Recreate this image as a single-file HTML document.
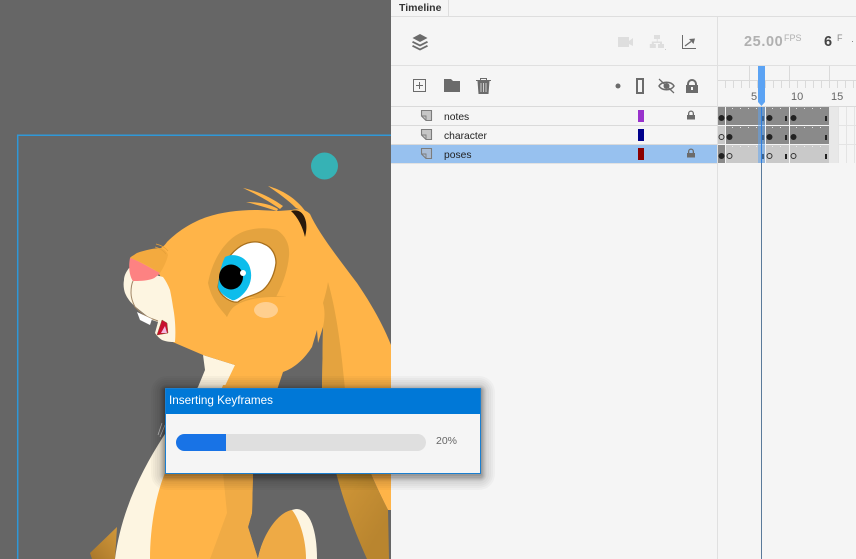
<!DOCTYPE html>
<html><head><meta charset="utf-8"><style>
html,body{margin:0;padding:0;background:#f5f5f5}
#r{position:relative;width:856px;height:559px;overflow:hidden;background:#f5f5f5;font-family:"Liberation Sans",sans-serif}
#r>*{position:absolute}
.t{font-size:10.3px;color:#222;line-height:12px;white-space:nowrap}
.s{background:rgba(0,0,0,.028);border-radius:8px}
</style></head><body><div id="r">
<svg style="left:0;top:0" width="391" height="559" viewBox="0 0 391 559">
<defs>
<linearGradient id="ls" x1="0" y1="1" x2="1" y2="0"><stop offset="0" stop-color="#a9772a"/><stop offset="1" stop-color="#d2983a"/></linearGradient>
<linearGradient id="ear2" x1="0" y1="0" x2="0.6" y2="1"><stop offset="0" stop-color="#e8a840"/><stop offset="1" stop-color="#b9852f"/></linearGradient>
</defs>
<rect width="391" height="559" fill="#666"/>
<path d="M17.700 559V135.300H391" fill="none" stroke="#2f98d8" stroke-width="1.500"/>
<circle cx="324.500" cy="166" r="13.500" fill="#36b2b5"/>
<!-- foot -->
<path d="M90 553L117 527L115 559H92Z" fill="url(#ls)"/>
<!-- cream body -->
<path d="M203 355L205 370L198 387C175 420 125 480 115 559H150L240 378L235 365Z" fill="#fdf5e1"/>
<path d="M162 423L158 435M165 425L160 437" stroke="#ccc" stroke-width=".7"/>
<!-- orange body -->
<path d="M223 385C215 410 180 440 165 473C155 497 150 530 150 559H258L248 527L252 513L253 473L277 385Z" fill="#ffb448"/>
<path d="M223 473L227 513L210 559H258L248 527L252 513L253 473Z" fill="#f0ab45"/>
<!-- knee -->
<path d="M258 559C262 535 280 510 297 509C310 510 317 530 317 559Z" fill="#fdf5e1"/>
<path d="M258 559C262 535 278 512 292 510C300 520 306 540 306 559Z" fill="#eeaa45"/>
<!-- lower ear -->
<path d="M347 380H391V510H388C360 455 350 420 347 380Z" fill="#ffb448"/>
<path d="M322 380H347C350 420 360 455 388 510L389 559H367C345 510 325 450 322 380Z" fill="url(#ear2)"/>
<!-- fur tuft -->
<path d="M243 188C258 191 272 198 283 206L280 209C270 202 258 195 243 188Z" fill="#ffb448"/>
<path d="M268 186C282 190 296 198 306 212L296 208C288 200 278 193 268 186Z" fill="#ffb448"/>
<path d="M246 202C258 202 270 204 278 209L277 211C268 208 258 205 246 202Z" fill="#ffb448"/>
<!-- head and ear -->
<path d="M130 258C133 254 145 251 157 250C162 248 165 245 167 242C180 229 195 221 207 217C222 212 240 210 258 210L278 211L292 210C300 208 306 210 310 214C318 232 338 258 357 283C372 305 383 325 391 345V390H322L323 327L318 343L317 330L312 347C305 358 295 368 283 372L277 390H223L235 365L203 355L168 340L160 275Z" fill="#ffb448"/>
<!-- ear shading -->
<path d="M328 282C336 310 341 345 345 390H322L323 327C325 318 325 310 323 303C325 296 327 289 328 282Z" fill="#e4a33f"/>
<!-- eyebrow -->
<path d="M291 211C298 209 304 212 306 222C307 228 306 233 305 237C303 228 298 217 291 211Z" fill="#2a1a0c"/>
<!-- eye socket -->
<path d="M208 283C212 262 222 245 235 236C245 229 262 226 277 230C286 236 290 245 289 256C288 268 284 282 276 297H247C238 301 231 308 227 317C222 310 212 302 208 283Z" fill="#e4a33f"/>
<!-- eye -->
<path d="M218 287C220 272 226 257 238 248C246 242 256 240 264 244C272 247 276 255 276 263C275 272 271 283 263 290C255 296 245 296 238 302C232 303 220 297 218 287Z" fill="#fff" stroke="#a86f1c" stroke-width="1.300"/>
<path d="M225 257C232 253 244 255 249 265C254 277 250 289 240 297C237 299 234 301 232 300C225 297 219 292 218 287C219 276 221 265 225 257Z" fill="#0dbdec"/>
<ellipse cx="231" cy="277" rx="12" ry="12.500" fill="#000"/>
<circle cx="243" cy="273" r="3" fill="#fff"/>
<!-- cheek crease -->
<path d="M226 317C231 302 250 293 287 297C262 296 245 299 235 306C231 309 228 313 226 317Z" fill="#e4a33f"/>
<ellipse cx="266" cy="310" rx="12" ry="8" fill="#ffcf8f"/>
<!-- muzzle -->
<path d="M129 268C126 272 124 276 124 280C123 285 124 290 125 293C128 300 132 304 137 308L152 320L158 322L155 333C157 336 159 338 162 340C167 342 171 342 175 342C176 330 175 317 173 307C172 300 171 295 170 290C168 285 166 281 163 277Z" fill="#fdf5e1"/>
<path d="M133 281C131 285 131 289 131 293C131 298 133 303 135 307C140 312 145 316 150 318L158 321" fill="none" stroke="#a08565" stroke-width="1"/>
<path d="M137 312L152 319L150 325L140 320Z" fill="#fff"/>
<path d="M157 335L162 320L167 323L168 333Z" fill="#c8102e" stroke="#8a5a30" stroke-width=".5"/>
<path d="M161 333L165 326L167 333Z" fill="#f5b8e0"/>
<!-- nose -->
<path d="M130 258C133 256 135 254 137 253C145 250 155 248 162 248C165 250 167 252 168 255C167 260 165 264 163 268L160 273C152 268 140 261 130 258Z" fill="#f3aa3f"/>
<path d="M130 258C137 260 145 265 160 273C157 276 155 278 152 279C146 281 139 281 133 281C130 277 128 268 130 258Z" fill="#fd8282"/>
<path d="M156 244C160 245 165 247 168 251M155 247C159 248 163 250 166 254" stroke="#e6a03a" stroke-width=".8" fill="none"/>
</svg>
<!-- panel -->
<div style="left:391px;top:0;width:465px;height:559px;background:#f5f5f5"></div>
<div style="left:391px;top:16px;width:465px;height:1px;background:#dedede"></div>
<div style="left:448px;top:0;width:1px;height:16px;background:#dedede"></div>
<div class="t" style="left:399px;top:2px;font-weight:bold;color:#333;font-size:10.500px">Timeline</div>
<div style="left:391px;top:65px;width:465px;height:1px;background:#e0e0e0"></div>
<div style="left:391px;top:106px;width:465px;height:1px;background:#dadada"></div>
<div style="left:717px;top:17px;width:1px;height:542px;background:#e0e0e0"></div>
<!-- rows -->
<div style="left:391px;top:125px;width:326px;height:1px;background:#dadada"></div>
<div style="left:391px;top:144px;width:326px;height:1px;background:#dadada"></div>
<div style="left:391px;top:145px;width:326px;height:18px;background:#97c1ef"></div>
<div style="left:391px;top:163px;width:326px;height:1px;background:#e2e2e2"></div>
<div class="t" style="left:444px;top:112px">notes</div>
<div class="t" style="left:444px;top:131px">character</div>
<div class="t" style="left:444px;top:150px">poses</div>
<div style="left:638px;top:110px;width:6px;height:12px;background:#9932cc"></div>
<div style="left:638px;top:129px;width:6px;height:12px;background:#00008b"></div>
<div style="left:638px;top:148px;width:6px;height:12px;background:#8b0000"></div>
<!-- icon svg -->
<svg style="left:391px;top:17px" width="326" height="147" viewBox="391 17 326 147">
<g fill="#6b6b6b">
<path d="M420 34L427.500 38L420 42L412.500 38Z"/>
<path d="M413 41L420 44.500L427 41L428 42.500L420 46.500L412 42.500Z"/>
<path d="M413 45L420 48.500L427 45L428 46.500L420 50.500L412 46.500Z"/>
</g>
<path d="M618 37h11v10h-11zM629 41l4-3v8l-4-2z" fill="#dedede"/>
<path d="M654 35h6v4h-2.300v2.500h4.300v2.500h2v4h-6v-4h2v-1h-6.200v1h2v4h-6v-4h2v-2.500h5v-2.500h-2.800z" fill="#dedede"/>
<rect x="665" y="49" width="1" height="1" fill="#ccc"/>
<path d="M682.500 35V48.500H696" fill="none" stroke="#6b6b6b" stroke-width="1"/>
<path d="M685 46L691 41.500" stroke="#6b6b6b" stroke-width="1.300" fill="none"/>
<path d="M689 39L695 38.500L693.500 44Z" fill="#6b6b6b"/>
<rect x="413.500" y="79.500" width="12" height="12" fill="none" stroke="#6b6b6b"/>
<path d="M419.500 82V89M416 85.500H423" stroke="#6b6b6b"/>
<path d="M444 92V79H451L453 81H460V92Z" fill="#6b6b6b"/>
<path d="M476 80.500H491M480.500 80V78.500H486.500V80" stroke="#6b6b6b" fill="none"/>
<path d="M477.500 81H489.500L488.500 94H478.500Z" fill="#6b6b6b"/>
<path d="M481 83V92M483.500 83V92M486 83V92" stroke="#e8e8e8" stroke-width=".8"/>
<circle cx="618" cy="86" r="2.500" fill="#6b6b6b"/>
<rect x="637" y="79" width="6" height="14" fill="none" stroke="#6b6b6b" stroke-width="2"/>
<path d="M659 86C662 81 671 81 674 86C671 91 662 91 659 86Z" fill="none" stroke="#6b6b6b" stroke-width="1.500"/>
<circle cx="666.500" cy="86" r="3" fill="#6b6b6b"/>
<path d="M659 79L674 93" stroke="#6b6b6b" stroke-width="1.200"/>
<path d="M688 85V84a4 4 0 0 1 8 0V85" fill="none" stroke="#6b6b6b" stroke-width="2"/>
<rect x="686" y="85" width="12" height="8" fill="#6b6b6b"/>
<rect x="691" y="87" width="2" height="3" fill="#f5f5f5"/>
<g fill="#c6c6c6" stroke="#7c7c7c" stroke-width="1.100">
<path d="M421.500 110.500H431.500V120.500H426L421.500 116Z"/>
<path d="M421.500 129.500H431.500V139.500H426L421.500 135Z"/>
<path d="M421.500 148.500H431.500V158.500H426L421.500 154Z" fill="#a9bcd4"/>
</g>
<path d="M421.500 116H426V120.500" fill="none" stroke="#7c7c7c" stroke-width=".9"/>
<path d="M421.500 135H426V139.500" fill="none" stroke="#7c7c7c" stroke-width=".9"/>
<path d="M421.500 154H426V158.500" fill="none" stroke="#7c7c7c" stroke-width=".9"/>
<g fill="#6b6b6b">
<path d="M688 115V113.500a3 3 0 0 1 6 0V115h-1.300V113.500a1.700 1.700 0 0 0-3.400 0V115Z"/>
<rect x="687" y="115" width="8" height="4.500"/>
<path d="M688 153V151.500a3 3 0 0 1 6 0V153h-1.300V151.500a1.700 1.700 0 0 0-3.400 0V153Z"/>
<rect x="687" y="153" width="8" height="4.500"/>
</g>
</svg>
<div style="left:744px;top:34px;font-size:14.500px;font-weight:bold;color:#b0b0b0;letter-spacing:.6px;line-height:16px">25.00</div>
<div style="left:784px;top:33px;font-size:9px;color:#b0b0b0;line-height:10px">FPS</div>
<div style="left:824px;top:34px;font-size:14.500px;font-weight:bold;color:#444;line-height:16px">6</div>
<div style="left:837px;top:33px;font-size:9px;color:#888;line-height:10px">F</div>
<div style="left:852px;top:41px;width:1px;height:1px;background:#888"></div>
<!-- timeline svg -->
<svg style="left:718px;top:66px" width="138" height="493" viewBox="718 66 138 493">
<g stroke="#dadada" stroke-width="1" fill="none">
<path d="M725.500 80V88M733.500 80V88M741.500 80V88M757.500 80V88M765.500 80V88M773.500 80V88M781.500 80V88M797.500 80V88M805.500 80V88M813.500 80V88M821.500 80V88M837.500 80V88M845.500 80V88M853.500 80V88"/>
<path d="M749.500 66V88M789.500 66V88M829.500 66V88"/>
<path d="M718 80.500H856"/>
</g>
<g font-family="Liberation Sans,sans-serif" font-size="11" fill="#666">
<text x="751" y="100">5</text><text x="791" y="100">10</text><text x="831" y="100">15</text>
</g>
<path d="M838.500 107V163M846.500 107V163M854.500 107V163" stroke="#e4e4e4"/>
<path d="M829 125.500H856M829 144.500H856" stroke="#e4e4e4"/>
<rect x="829" y="107" width="9" height="56" fill="#e8e8e8"/>
<g fill="#8a8a8a">
<rect x="718" y="107" width="7" height="18"/><rect x="726" y="107" width="39" height="18"/><rect x="766" y="107" width="23" height="18"/><rect x="790" y="107" width="39" height="18"/>
<rect x="726" y="126" width="39" height="18"/><rect x="766" y="126" width="23" height="18"/><rect x="790" y="126" width="39" height="18"/>
<rect x="718" y="145" width="7" height="18"/>
</g>
<rect x="718" y="126" width="7" height="18" fill="#c9c9c9"/>
<g fill="#c9c9c9"><rect x="726" y="145" width="39" height="18"/><rect x="766" y="145" width="23" height="18"/><rect x="790" y="145" width="39" height="18"/></g>
<g fill="#eee" opacity=".9">
<rect x="732" y="108" width="1" height="1"/><rect x="740" y="108" width="1" height="1"/><rect x="748" y="108" width="1" height="1"/><rect x="756" y="108" width="1" height="1"/><rect x="772" y="108" width="1" height="1"/><rect x="780" y="108" width="1" height="1"/><rect x="796" y="108" width="1" height="1"/><rect x="804" y="108" width="1" height="1"/><rect x="812" y="108" width="1" height="1"/><rect x="820" y="108" width="1" height="1"/>
<rect x="732" y="127" width="1" height="1"/><rect x="740" y="127" width="1" height="1"/><rect x="748" y="127" width="1" height="1"/><rect x="756" y="127" width="1" height="1"/><rect x="772" y="127" width="1" height="1"/><rect x="780" y="127" width="1" height="1"/><rect x="796" y="127" width="1" height="1"/><rect x="804" y="127" width="1" height="1"/><rect x="812" y="127" width="1" height="1"/><rect x="820" y="127" width="1" height="1"/>
<rect x="732" y="146" width="1" height="1"/><rect x="740" y="146" width="1" height="1"/><rect x="748" y="146" width="1" height="1"/><rect x="756" y="146" width="1" height="1"/><rect x="772" y="146" width="1" height="1"/><rect x="780" y="146" width="1" height="1"/><rect x="796" y="146" width="1" height="1"/><rect x="804" y="146" width="1" height="1"/><rect x="812" y="146" width="1" height="1"/><rect x="820" y="146" width="1" height="1"/>
</g>
<g fill="#222">
<circle cx="721.500" cy="118" r="3"/><circle cx="729.500" cy="118" r="3"/><circle cx="769.500" cy="118" r="3"/><circle cx="793.500" cy="118" r="3"/>
<circle cx="729.500" cy="137" r="3"/><circle cx="769.500" cy="137" r="3"/><circle cx="793.500" cy="137" r="3"/>
<circle cx="721.500" cy="156" r="3"/>
<rect x="762" y="116" width="2" height="5"/><rect x="785" y="116" width="2" height="5"/><rect x="825" y="116" width="2" height="5"/>
<rect x="762" y="135" width="2" height="5"/><rect x="785" y="135" width="2" height="5"/><rect x="825" y="135" width="2" height="5"/>
<rect x="762" y="154" width="2" height="5"/><rect x="785" y="154" width="2" height="5"/><rect x="825" y="154" width="2" height="5"/>
</g>
<g fill="none" stroke="#333" stroke-width="1">
<circle cx="721.500" cy="137" r="2.500"/><circle cx="729.500" cy="156" r="2.500"/><circle cx="769.500" cy="156" r="2.500"/><circle cx="793.500" cy="156" r="2.500"/>
</g>
<rect x="758" y="107" width="7" height="56" fill="#5ba3f4" opacity=".5"/>
<path d="M761.500 107V163" stroke="#2f80e0" stroke-width="1"/>
<path d="M761.500 163V559" stroke="#5a7a9a" stroke-width="1"/>
<path d="M758 66H765V102L761.500 106L758 102Z" fill="#5ba3f4"/>
</svg>
<!-- dialog shadow: stacked translucent layers -->
<div class="s" style="left:151px;top:376px;width:344px;height:114px;border-radius:16px"></div>
<div class="s" style="left:153px;top:378px;width:340px;height:110px;border-radius:14px"></div>
<div class="s" style="left:155px;top:380px;width:336px;height:106px;border-radius:12px"></div>
<div class="s" style="left:157px;top:382px;width:332px;height:102px;border-radius:10px"></div>
<div class="s" style="left:159px;top:384px;width:328px;height:98px"></div>
<div class="s" style="left:160px;top:385px;width:326px;height:96px;border-radius:6px;background:rgba(0,0,0,.04)"></div>
<div class="s" style="left:161px;top:386px;width:324px;height:94px;border-radius:5px;background:rgba(0,0,0,.05)"></div>
<div class="s" style="left:162px;top:387px;width:322px;height:92px;border-radius:4px;background:rgba(0,0,0,.06)"></div>
<div class="s" style="left:163px;top:388px;width:320px;height:90px;border-radius:3px;background:rgba(0,0,0,.07)"></div>
<div class="s" style="left:164px;top:388px;width:318px;height:88px;border-radius:2px;background:rgba(0,0,0,.08)"></div>
<!-- dialog -->
<div style="left:165px;top:388px;width:316px;height:86px;box-sizing:border-box;background:#f5f5f5;border:1px solid #1a7fd0"></div>
<div style="left:166px;top:389px;width:314px;height:25px;background:#0078d7"></div>
<div style="left:169px;top:394px;font-size:11.700px;line-height:14px;color:#fff;white-space:nowrap">Inserting Keyframes</div>
<div style="left:176px;top:434px;width:250px;height:17px;border-radius:9px;background:#dfdfdf;overflow:hidden"><div style="width:50px;height:17px;background:#1873e6"></div></div>
<div style="left:436px;top:435px;font-size:10.500px;line-height:12px;color:#666">20%</div>
</div></body></html>
